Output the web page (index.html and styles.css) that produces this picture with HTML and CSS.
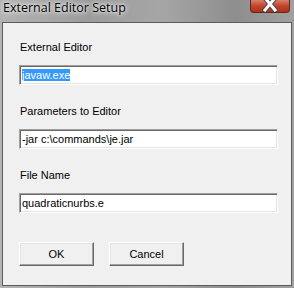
FILE: index.html
```html
<!DOCTYPE html>
<html lang="en">
<head>
    <meta charset="utf-8">
    <title>External Editor Setup</title>
    <link rel="stylesheet" href="styles.css">
</head>
<body>
    <div class="titlebar">
        <span class="title">External Editor Setup</span>
        <div class="close">
            <svg width="16" height="12" viewBox="0 0 16 12">
                <path d="M3 -2 L13 10 M13 -2 L3 10" stroke="#4a4a4a" stroke-width="5" stroke-linecap="square"/>
                <path d="M3 -2 L13 10 M13 -2 L3 10" stroke="#fff" stroke-width="3" stroke-linecap="square"/>
            </svg>
        </div>
    </div>
    <div class="client">
        <div class="field">
            <label>External Editor</label>
            <div class="textbox"><span class="selected">javaw.exe</span></div>
        </div>
        <div class="field">
            <label>Parameters to Editor</label>
            <div class="textbox">-jar c:\commands\je.jar</div>
        </div>
        <div class="field">
            <label>File Name</label>
            <div class="textbox">quadraticnurbs.e</div>
        </div>
        <div class="buttons">
            <button>OK</button>
            <button>Cancel</button>
        </div>
    </div>
</body>
</html>
```

FILE: styles.css
```css
body {
    margin: 0;
    width: 294px;
    height: 288px;
    overflow: hidden;
    background: linear-gradient(90deg, #b4b4b4 0%, #9c9c9c 30%, #a6a6a6 55%, #8e8e8e 80%, #a0a0a0 100%);
    font-family: "Liberation Sans", Arial, sans-serif;
}
.titlebar {
    height: 22px;
    display: flex;
    justify-content: space-between;
    align-items: flex-start;
}
.title {
    font-family: "Open Sans", "Noto Sans", sans-serif;
    font-size: 12.5px;
    line-height: 16px;
    margin: 0 0 0 3px;
    color: #000;
    text-shadow: 0 0 6px #e8e8e8, 0 0 4px #e8e8e8, 0 0 2px #e8e8e8;
}
.close {
    width: 40px;
    height: 13px;
    margin-right: 4px;
    box-sizing: border-box;
    border: 1px solid #5a2a20;
    border-top: none;
    border-radius: 0 0 4px 4px;
    background: linear-gradient(#d8806a, #c2442c 50%, #b03018);
    display: flex;
    justify-content: center;
    align-items: flex-start;
}
.client {
    margin: 0 2px;
    width: 290px;
    height: 264px;
    box-sizing: border-box;
    border: 1px solid #5c5c5c;
    background: #f0f0f0;
    padding: 18px 0 0 16px;
    font-size: 11px;
}
.field {
    display: flex;
    flex-direction: column;
    margin-bottom: 20px;
}
.field label {
    line-height: 13px;
    margin-left: 1px;
    color: #000;
}
.textbox {
    margin-top: 11px;
    width: 259px;
    height: 20px;
    box-sizing: border-box;
    border: 1px solid;
    border-color: #a0a0a0 #fff #fff #a0a0a0;
    box-shadow: inset 1px 1px 0 #696969, inset -1px -1px 0 #e3e3e3;
    background: #fff;
    padding: 3px 0 0 2px;
    line-height: 13px;
    color: #000;
    white-space: nowrap;
}
.selected {
    background: #3399ff;
    color: #fff;
}
.buttons {
    display: flex;
    gap: 15px;
    margin-top: 29px;
}
button {
    width: 75px;
    height: 24px;
    padding: 0;
    font-family: "Liberation Sans", Arial, sans-serif;
    font-size: 11px;
    color: #000;
    background: #f0f0f0;
    border: 1px solid;
    border-color: #fff #696969 #696969 #fff;
    box-shadow: inset -1px -1px 0 #a0a0a0, inset 1px 1px 0 #e3e3e3;
}
```
